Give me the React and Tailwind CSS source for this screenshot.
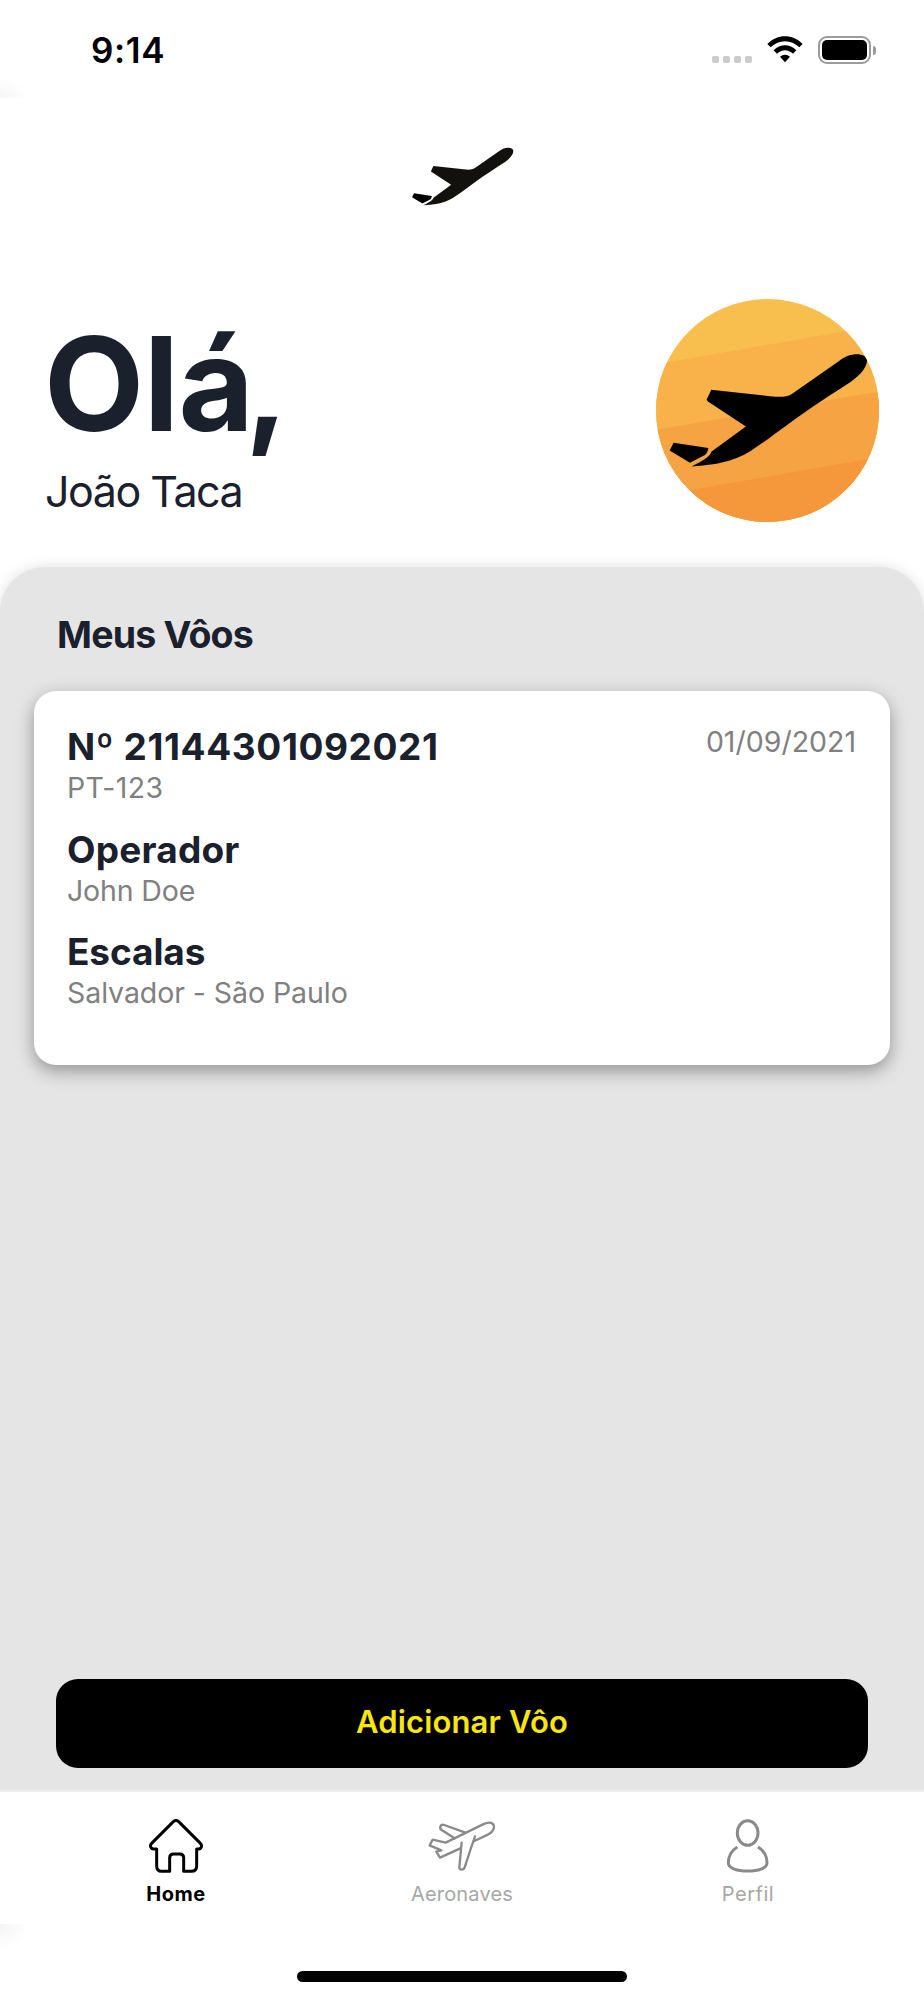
function Plane({ tail }) {
    return (
        <>
            <path d="M155 545C230 540 280 530 330 500C370 475 400 450 445 418C500 378 550 345 620 300C655 278 683 250 682 225C680 205 635 198 598 228L455 328C440 337 420 337 390 334L214 315L200 345L204 350L318 425L215 500C210 515 195 524 155 545Z" fill="currentColor" />
            <path d="M101 474L205 490C204 502 197 510 195 511L150 534L89 497Z" fill={tail} />
        </>
    )
}

function StatusBar() {
    return (
        <div className="relative flex h-[98px] items-start justify-between pl-[91px] pr-[48px]">
            <div className="absolute bottom-0 left-0 h-[20px] w-[28px] bg-radial-[at_0%_100%] from-[#f6f6f6] to-white to-70%"></div>
            <span className="mt-[29px] text-[35px] font-semibold leading-[42px] tracking-[0.6px] text-black">9:14</span>
            <div className="mt-[36px] flex items-start">
                <div className="mr-[15px] mt-[20px] flex gap-[4px]">
                    <span className="size-[7px] rounded-[2px] bg-[#cbcbcb]"></span>
                    <span className="size-[7px] rounded-[2px] bg-[#cbcbcb]"></span>
                    <span className="size-[7px] rounded-[2px] bg-[#cbcbcb]"></span>
                    <span className="size-[7px] rounded-[2px] bg-[#cbcbcb]"></span>
                </div>
                <svg className="mr-[15px] h-[27px] w-[36px]" viewBox="0 0 108 81">
                    <path d="M1 24C31-7 77-7 107 24L97 34C72 10 36 10 11 34Z" />
                    <path d="M20 43C40 23 68 23 88 43L78 53C64 39 44 39 30 53Z" />
                    <path d="M39 62C48 54 60 54 69 62L54 79Z" strokeLinejoin="round" />
                </svg>
                <div className="flex items-center">
                    <div className="h-[28px] w-[53px] rounded-[9px] border-2 border-[#9b9b9b] p-[2px]">
                        <div className="h-full rounded-[5px] bg-black"></div>
                    </div>
                    <div className="ml-[2px] h-[9px] w-[3px] rounded-r-full bg-[#9b9b9b]"></div>
                </div>
            </div>
        </div>
    )
}

function Avatar() {
    return (
        <svg className="size-[223px] rounded-full text-black" viewBox="48 42 670 670">
            <rect x="48" y="42" width="670" height="670" fill="#f8bf4f" />
            <path d="M48 238L718 121V712H48Z" fill="#f9b24a" />
            <path d="M48 435L718 320V712H48Z" fill="#f6a343" />
            <path d="M48 635L718 517V712H48Z" fill="#f5983b" />
            <Plane tail="currentColor" />
        </svg>
    )
}

const details = [
    { title: "Nº 21144301092021", value: "PT-123", titleSpacing: "tracking-[0.6px]", valueSpacing: "tracking-[0.4px]" },
    { title: "Operador", value: "John Doe", titleSpacing: "tracking-[0.2px]", valueSpacing: "tracking-[-0.15px]" },
    { title: "Escalas", value: "Salvador - São Paulo", titleSpacing: "tracking-[-0.1px]", valueSpacing: "tracking-[-0.07px]" },
]

function FlightCard() {
    return (
        <div className="mx-[34px] mt-[34px] flex h-[374px] items-start justify-between rounded-[22px] bg-white pl-[33px] pr-[34px] shadow-[0_6px_18px_rgba(0,0,0,0.36)]">
            <div className="mt-[34px] flex flex-col gap-[21.6px]">
                {details.map((item) => (
                    <div key={item.title}>
                        <h3 className={`text-[37px] font-bold leading-[44px] text-[#1a202c] ${item.titleSpacing}`}>{item.title}</h3>
                        <p className={`mt-px text-[28.5px] leading-[36px] text-[#808080] ${item.valueSpacing}`}>{item.value}</p>
                    </div>
                ))}
            </div>
            <span className="mt-[33px] text-[28.5px] leading-[36px] text-[#808080]">01/09/2021</span>
        </div>
    )
}

function HomeIcon() {
    return (
        <svg className="size-[54px]" viewBox="0 0 162 162" fill="none" stroke="currentColor" strokeWidth="9" strokeLinejoin="round">
            <path d="M73 8Q81 1 89 8L155 74C160 80 157 90 149 90H143V141Q143 157 127 157H104V117Q104 105 93 105H73Q62 105 62 117V157H38Q23 157 23 141V90H14C5 90 2 80 7 74Z" />
        </svg>
    )
}

function AircraftIcon() {
    return (
        <svg className="h-[54px] w-[68px]" viewBox="0 0 204 162" fill="none" stroke="currentColor" strokeWidth="7" strokeLinejoin="round" strokeLinecap="round">
            <path d="M139 66L181 46C205 33 202 10 182 11Q176 11 165 16L53 71L14 62L5 79L40 94L25 98L36 116L97 88" />
            <path d="M112 41L49 18C37 14 32 28 42 34L80 58" />
            <path d="M101 71L94 145C94 154 107 154 110 145L128 90L141 52" />
        </svg>
    )
}

function ProfileIcon() {
    return (
        <svg className="h-[54px] w-[44px]" viewBox="0 0 132 162" fill="none" stroke="currentColor" strokeWidth="9">
            <ellipse cx="65" cy="42" rx="31" ry="37" />
            <path d="M34 84C17 94 7 113 7 131C7 149 35 156 65 156S123 149 123 131C123 113 113 94 96 84" />
        </svg>
    )
}

function TabBar() {
    return (
        <nav className="grid h-[134px] grid-cols-3 border-t-2 border-[#eeeeee] bg-white px-[33px] pt-[27px] text-center text-[20px] leading-[24px]">
            <div className="flex flex-col items-center text-black">
                <HomeIcon />
                <span className="mt-[9px] font-bold tracking-[0.5px]">Home</span>
            </div>
            <div className="flex flex-col items-center text-[#8a8a8a]">
                <AircraftIcon />
                <span className="mt-[9px] tracking-[0.15px] text-[#a6a6a6]">Aeronaves</span>
            </div>
            <div className="flex flex-col items-center text-[#8a8a8a]">
                <ProfileIcon />
                <span className="mt-[9px] tracking-[0.5px] text-[#a6a6a6]">Perfil</span>
            </div>
        </nav>
    )
}

export default function App() {
    return (
        <div className="flex h-[2000px] w-[924px] flex-col overflow-hidden bg-white font-['Inter',sans-serif]">
            <StatusBar />
            <div className="flex h-[201px] justify-center pl-[2px] pt-[49px]">
                <svg className="h-[59px] w-[102px] text-[#12110d]" viewBox="89 205 597 342">
                    <Plane tail="#000" />
                </svg>
            </div>
            <header className="flex h-[268px] items-start justify-between pl-[45px] pr-[45px]">
                <div className="mt-[20px] text-[#1a202c]">
                    <h1 className="-ml-px h-[130px] text-[130px] font-bold leading-[130px] tracking-[-0.5px]">
                        Ol<span className="tracking-[-9px]">á</span>,
                    </h1>
                    <p className="mt-[16px] text-[43px] leading-[52px] tracking-[-1.5px]">João Taca</p>
                </div>
                <Avatar />
            </header>
            <section className="flex h-[1223px] flex-col rounded-t-[45px] bg-[#e5e5e5] pt-[45px] shadow-[0_0_14px_rgba(0,0,0,0.12)]">
                <h2 className="ml-[57px] text-[37.5px] font-bold leading-[45px] tracking-[-0.8px] text-[#1a202c]">Meus Vôos</h2>
                <FlightCard />
                <button className="mx-[56px] mb-[22px] mt-auto h-[89px] rounded-[22px] bg-black pb-[2px] text-[31px] font-semibold tracking-[0.15px] text-[#fae60f]">
                    Adicionar Vôo
                </button>
            </section>
            <TabBar />
            <div className="relative flex flex-1 justify-center bg-white pt-[47px]">
                <div className="absolute left-0 top-0 h-[26px] w-[28px] bg-radial-[at_0%_0%] from-[#f4f4f4] to-white to-70%"></div>
                <div className="h-[11px] w-[330px] rounded-full bg-black"></div>
            </div>
        </div>
    )
}
